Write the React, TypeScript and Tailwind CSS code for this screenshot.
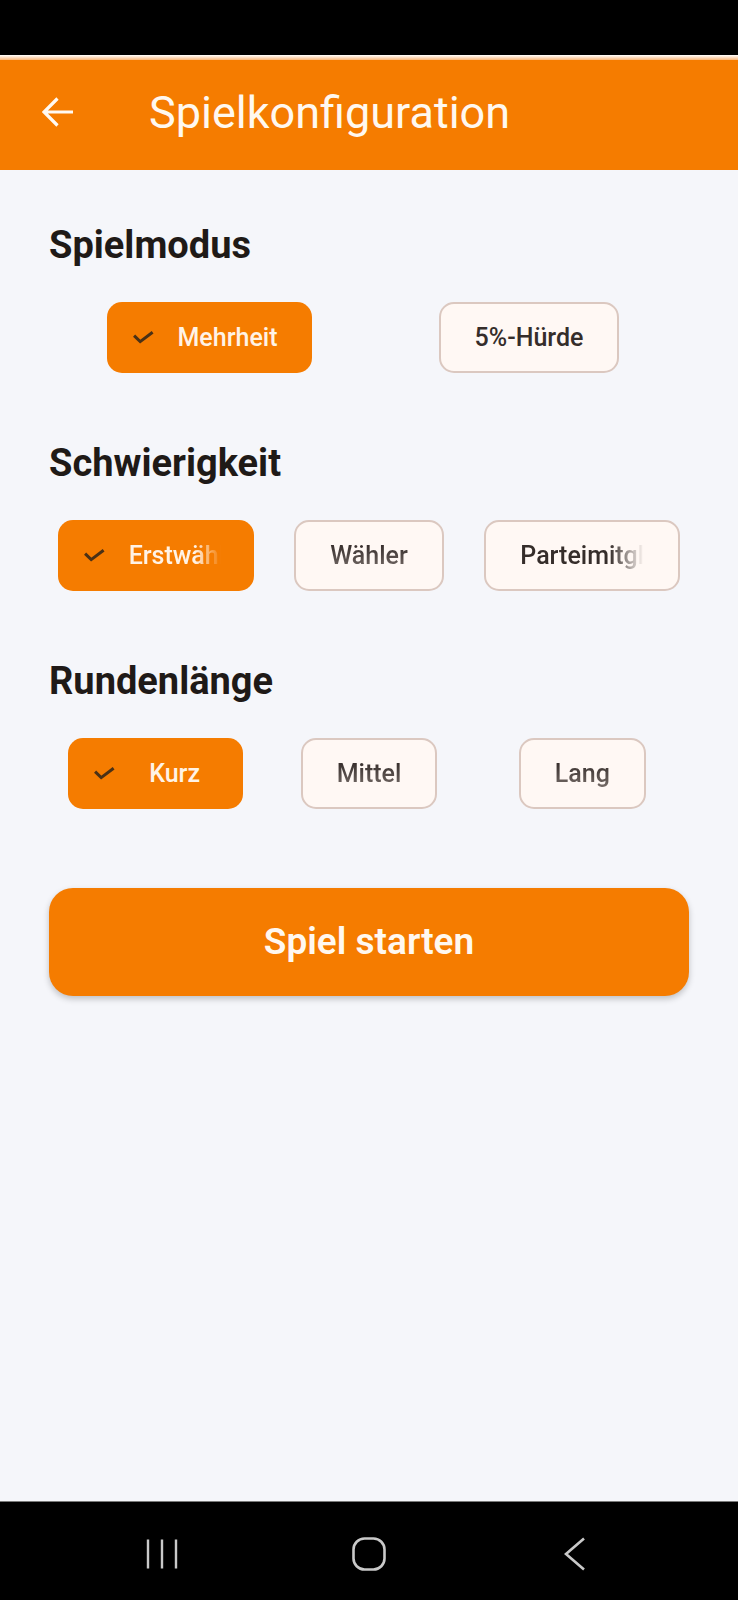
import React from 'react';

type ChipData = {
  label: string;
  selected?: boolean;
  width?: string;
  gap?: string;
  labelWidth?: string;
  fade?: boolean;
  soft?: boolean;
};

const sections: { title: string; cols: string; chips: ChipData[] }[] = [
  {
    title: 'Spielmodus',
    cols: 'grid-cols-2',
    chips: [
      { label: 'Mehrheit', selected: true, width: 'w-[205px]', gap: 'ml-[24px]' },
      { label: '5%-Hürde' },
    ],
  },
  {
    title: 'Schwierigkeit',
    cols: 'grid-cols-3',
    chips: [
      { label: 'Erstwähler', selected: true, width: 'w-[196px]', gap: 'ml-[24px]', labelWidth: 'w-[92px]', fade: true },
      { label: 'Wähler', soft: true },
      { label: 'Parteimitglied', width: 'w-[196px]', labelWidth: 'w-[124px]', fade: true },
    ],
  },
  {
    title: 'Rundenlänge',
    cols: 'grid-cols-3',
    chips: [
      { label: 'Kurz', selected: true, width: 'w-[175px]', gap: 'ml-[34px]' },
      { label: 'Mittel', soft: true },
      { label: 'Lang', soft: true },
    ],
  },
];

function CheckIcon() {
  return (
    <svg width="21" height="13" viewBox="0 0 21 13" fill="none" className="shrink-0">
      <path d="M1.1 4.6 L7.2 10.6 L19.6 1.2" stroke="#4a3116" strokeWidth="3" />
    </svg>
  );
}

function Chip({ c }: { c: ChipData }) {
  const fadeMask = c.fade ? '[mask-image:linear-gradient(to_right,black_72%,transparent)]' : '';
  if (c.selected) {
    return (
      <div className={`flex items-center h-[71px] rounded-[15px] bg-[#f57c00] pl-[26px] ${c.width}`}>
        <CheckIcon />
        <span
          className={`${c.gap} whitespace-nowrap text-[25px] font-medium leading-[32px] text-[#fff3e6] ${
            c.labelWidth ? `overflow-hidden ${c.labelWidth}` : ''
          } ${fadeMask}`}
        >
          {c.label}
        </span>
      </div>
    );
  }
  return (
    <div
      className={`flex items-center h-[71px] rounded-[15px] border-2 border-[#dbc8c0] bg-[#fff8f4] px-[34px] ${c.width ?? ''}`}
    >
      <span
        className={`whitespace-nowrap text-[25px] font-medium leading-[32px] ${
          c.labelWidth ? `overflow-hidden ${c.labelWidth}` : ''
        } ${fadeMask} ${
          c.soft ? 'bg-gradient-to-b from-[#2c2422] to-[#7d736f] bg-clip-text text-transparent' : 'text-[#352d2a]'
        }`}
      >
        {c.label}
      </span>
    </div>
  );
}

export default function App() {
  return (
    <div className="flex h-[1600px] w-full flex-col bg-[#f5f6fa] font-[Roboto,sans-serif]">
      <div className="h-[55px] bg-black" />
      <div className="h-[5px] bg-gradient-to-b from-white to-[#f9b77a]" />
      <header className="flex h-[110px] items-center bg-[#f57c00] pb-[6px] pl-[42px]">
        <svg width="32" height="30" viewBox="0 0 32 30" fill="none" className="shrink-0">
          <path d="M31 15 H2.5 M15.5 1.5 L2 15 L15.5 28.5" stroke="#fffaf3" strokeWidth="3.2" />
        </svg>
        <h1 className="ml-[75px] text-[45px] font-normal leading-none text-[#fff8ef]">Spielkonfiguration</h1>
      </header>

      <main className="flex-1 px-[49px] pt-[57px]">
        {sections.map((s, i) => (
          <section key={s.title} className={i > 0 ? 'mt-[72px]' : ''}>
            <h2 className="text-[38px] font-bold leading-[36px] text-[#1f1a17]">{s.title}</h2>
            <div className={`mt-[39px] grid ${s.cols} justify-items-center`}>
              {s.chips.map((c) => (
                <Chip key={c.label} c={c} />
              ))}
            </div>
          </section>
        ))}

        <button className="mt-[79px] flex h-[108px] w-full items-center justify-center rounded-[24px] bg-[#f57c00] text-[37px] font-semibold text-[#fff8f0] shadow-[0_3px_6px_rgba(0,0,0,0.22)]">
          Spiel starten
        </button>
      </main>

      <nav className="flex h-[99px] items-center justify-center gap-[166px] border-t border-[#7a7a7a] bg-black pt-[5px]">
        <svg width="40" height="32" viewBox="0 0 40 32" fill="none">
          <path d="M5 1.5 V30.5 M19 1.5 V30.5 M33 1.5 V30.5" stroke="#c9c9c9" strokeWidth="2.4" />
        </svg>
        <svg width="40" height="34" viewBox="0 0 40 34" fill="none">
          <rect x="4.5" y="1.5" width="31" height="31" rx="11" stroke="#c9c9c9" strokeWidth="2.6" />
        </svg>
        <svg width="40" height="34" viewBox="0 0 40 34" fill="none">
          <path d="M29 1.5 L11 17 L29 32.5" stroke="#c9c9c9" strokeWidth="2.6" />
        </svg>
      </nav>
    </div>
  );
}
